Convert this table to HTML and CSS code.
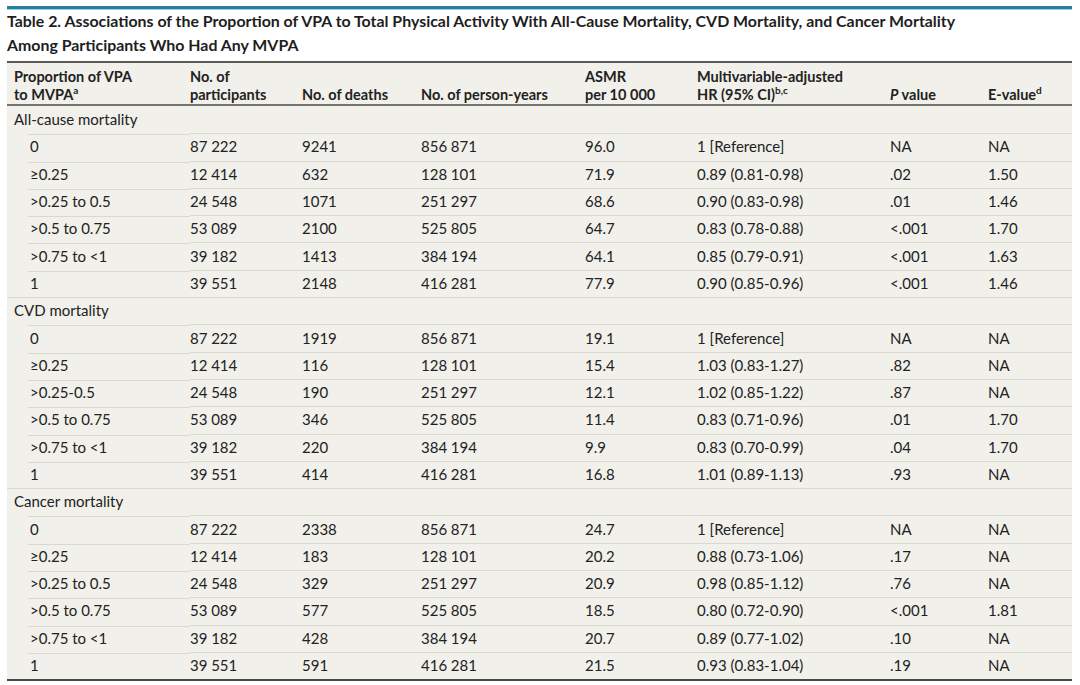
FILE: index.html
```html
<!DOCTYPE html>
<html>
<head>
<meta charset="utf-8">
<link rel="stylesheet" href="styles.css">
</head>
<body>
<div class="page">
  <div class="rule"></div>
  <h1 class="title">Table 2. Associations of the Proportion of VPA to Total Physical Activity With All-Cause Mortality, CVD Mortality, and Cancer Mortality Among Participants Who Had Any MVPA</h1>
  <table class="data">
    <colgroup>
      <col class="c1"><col class="c2"><col class="c3"><col class="c4"><col class="c5"><col class="c6"><col class="c7"><col class="c8">
    </colgroup>
    <thead>
      <tr>
        <th>Proportion of VPA<br>to MVPA<sup>a</sup></th>
        <th>No. of<br>participants</th>
        <th>No. of deaths</th>
        <th>No. of person-years</th>
        <th>ASMR<br>per 10&#8239;000</th>
        <th>Multivariable-adjusted<br>HR (95% CI)<sup>b,c</sup></th>
        <th><i>P</i> value</th>
        <th>E-value<sup>d</sup></th>
      </tr>
    </thead>
    <tbody>
      <tr class="sec"><td colspan="8">All-cause mortality</td></tr>
      <tr><td>0</td><td>87&#8239;222</td><td>9241</td><td>856&#8239;871</td><td>96.0</td><td>1 [Reference]</td><td>NA</td><td>NA</td></tr>
      <tr><td>≥0.25</td><td>12&#8239;414</td><td>632</td><td>128&#8239;101</td><td>71.9</td><td>0.89 (0.81-0.98)</td><td>.02</td><td>1.50</td></tr>
      <tr><td>&gt;0.25 to 0.5</td><td>24&#8239;548</td><td>1071</td><td>251&#8239;297</td><td>68.6</td><td>0.90 (0.83-0.98)</td><td>.01</td><td>1.46</td></tr>
      <tr><td>&gt;0.5 to 0.75</td><td>53&#8239;089</td><td>2100</td><td>525&#8239;805</td><td>64.7</td><td>0.83 (0.78-0.88)</td><td>&lt;.001</td><td>1.70</td></tr>
      <tr><td>&gt;0.75 to &lt;1</td><td>39&#8239;182</td><td>1413</td><td>384&#8239;194</td><td>64.1</td><td>0.85 (0.79-0.91)</td><td>&lt;.001</td><td>1.63</td></tr>
      <tr><td>1</td><td>39&#8239;551</td><td>2148</td><td>416&#8239;281</td><td>77.9</td><td>0.90 (0.85-0.96)</td><td>&lt;.001</td><td>1.46</td></tr>
      <tr class="sec"><td colspan="8">CVD mortality</td></tr>
      <tr><td>0</td><td>87&#8239;222</td><td>1919</td><td>856&#8239;871</td><td>19.1</td><td>1 [Reference]</td><td>NA</td><td>NA</td></tr>
      <tr><td>≥0.25</td><td>12&#8239;414</td><td>116</td><td>128&#8239;101</td><td>15.4</td><td>1.03 (0.83-1.27)</td><td>.82</td><td>NA</td></tr>
      <tr><td>&gt;0.25-0.5</td><td>24&#8239;548</td><td>190</td><td>251&#8239;297</td><td>12.1</td><td>1.02 (0.85-1.22)</td><td>.87</td><td>NA</td></tr>
      <tr><td>&gt;0.5 to 0.75</td><td>53&#8239;089</td><td>346</td><td>525&#8239;805</td><td>11.4</td><td>0.83 (0.71-0.96)</td><td>.01</td><td>1.70</td></tr>
      <tr><td>&gt;0.75 to &lt;1</td><td>39&#8239;182</td><td>220</td><td>384&#8239;194</td><td>9.9</td><td>0.83 (0.70-0.99)</td><td>.04</td><td>1.70</td></tr>
      <tr><td>1</td><td>39&#8239;551</td><td>414</td><td>416&#8239;281</td><td>16.8</td><td>1.01 (0.89-1.13)</td><td>.93</td><td>NA</td></tr>
      <tr class="sec"><td colspan="8">Cancer mortality</td></tr>
      <tr><td>0</td><td>87&#8239;222</td><td>2338</td><td>856&#8239;871</td><td>24.7</td><td>1 [Reference]</td><td>NA</td><td>NA</td></tr>
      <tr><td>≥0.25</td><td>12&#8239;414</td><td>183</td><td>128&#8239;101</td><td>20.2</td><td>0.88 (0.73-1.06)</td><td>.17</td><td>NA</td></tr>
      <tr><td>&gt;0.25 to 0.5</td><td>24&#8239;548</td><td>329</td><td>251&#8239;297</td><td>20.9</td><td>0.98 (0.85-1.12)</td><td>.76</td><td>NA</td></tr>
      <tr><td>&gt;0.5 to 0.75</td><td>53&#8239;089</td><td>577</td><td>525&#8239;805</td><td>18.5</td><td>0.80 (0.72-0.90)</td><td>&lt;.001</td><td>1.81</td></tr>
      <tr><td>&gt;0.75 to &lt;1</td><td>39&#8239;182</td><td>428</td><td>384&#8239;194</td><td>20.7</td><td>0.89 (0.77-1.02)</td><td>.10</td><td>NA</td></tr>
      <tr><td>1</td><td>39&#8239;551</td><td>591</td><td>416&#8239;281</td><td>21.5</td><td>0.93 (0.83-1.04)</td><td>.19</td><td>NA</td></tr>
    </tbody>
  </table>
</div>
</body>
</html>
```

FILE: styles.css
```css
html, body {
  margin: 0;
  padding: 0;
  background: #ffffff;
}

.page {
  width: 1065px;
  padding: 6px 0 0 7px;
  font-family: Lato, "Open Sans", sans-serif;
  color: #222222;
}

.rule {
  height: 3px;
  background: #2a7f9f;
  box-shadow: 0 1px 0 #8fd0e6;
}

.title {
  margin: 0;
  max-width: 990px;
  font-size: 15.9px;
  line-height: 24px;
  font-weight: 700;
  color: #1e1e1e;
  padding-bottom: 4px;
}

.data {
  width: 1065px;
  table-layout: fixed;
  border-collapse: separate;
  border-spacing: 0;
  background: #f1f0ea;
  font-size: 15px;
  border-top: 2px solid #5a5954;
  border-bottom: 2px solid #4a4945;
}

.c1 { width: 183px; }
.c2 { width: 112px; }
.c3 { width: 119px; }
.c4 { width: 164px; }
.c5 { width: 112px; }
.c6 { width: 193px; }
.c7 { width: 98px; }
.c8 { width: 84px; }

.data th {
  text-align: left;
  vertical-align: bottom;
  font-size: 14.5px;
  font-weight: 700;
  line-height: 18px;
  padding: 5px 0 0 0;
  border-bottom: 2px solid #75746f;
  color: #222;
}

.data th:first-child {
  padding-left: 7px;
}

.data th i {
  font-weight: 700;
}

.data sup {
  font-size: 10px;
  line-height: 0;
  vertical-align: 6px;
}

.data td {
  height: 27.3px;
  box-sizing: border-box;
  padding: 0 0 2px 0;
  line-height: 18px;
  vertical-align: middle;
  border-top: 1px solid #d9d7d0;
  white-space: nowrap;
}

.data td:first-child {
  padding-left: 23px;
  border-top-color: transparent;
  background: linear-gradient(#d9d7d0, #d9d7d0) no-repeat 21px 0 / calc(100% - 21px) 1px;
}

.data tbody tr:first-child td {
  border-top: none;
}

.data tr.sec td {
  padding-left: 7px;
  border-top: 1px solid #d9d7d0;
  background: none;
}
```
